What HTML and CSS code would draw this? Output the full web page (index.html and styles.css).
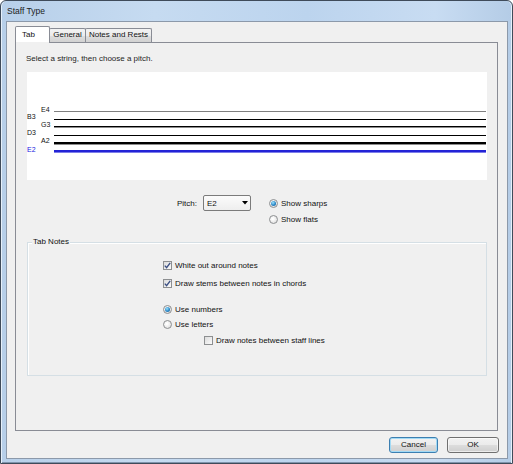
FILE: index.html
```html
<!DOCTYPE html>
<html>
<head>
<meta charset="utf-8">
<title>Staff Type</title>
<link rel="stylesheet" href="styles.css">
</head>
<body>
<div class="window">
  <div class="titlebar"><span class="title">Staff Type</span></div>
  <div class="client">
    <div class="tabs">
      <div class="tab active">Tab</div>
      <div class="tab w-general">General</div>
      <div class="tab w-notes">Notes and Rests</div>
    </div>
    <div class="panel">
      <div class="hint">Select a string, then choose a pitch.</div>
      <div class="staff">
        <svg width="460" height="108" viewBox="0 0 460 108">
          <rect x="27" y="39" width="432" height="1" fill="#7f7f7f"/>
          <rect x="27" y="47" width="432" height="1" fill="#000"/>
          <rect x="27" y="54" width="432" height="1" fill="#000"/>
          <rect x="27" y="55" width="432" height="1" fill="#8c8c8c"/>
          <rect x="27" y="63" width="432" height="1" fill="#000"/>
          <rect x="27" y="70" width="432" height="2" fill="#000"/>
          <rect x="27" y="72" width="432" height="1" fill="#8c8c8c"/>
          <rect x="27" y="78" width="432" height="2" fill="#2323d6"/>
          <rect x="27" y="80" width="432" height="1" fill="#7d7de9"/>
          <g class="notes" font-family="Liberation Sans, Arial, sans-serif" font-size="7">
            <text x="14" y="39.5" fill="#111">E4</text>
            <text x="0" y="47.2" fill="#111">B3</text>
            <text x="14" y="54.8" fill="#111">G3</text>
            <text x="0" y="63.2" fill="#111">D3</text>
            <text x="14" y="71.2" fill="#111">A2</text>
            <text x="0" y="79.5" fill="#2020e0">E2</text>
          </g>
        </svg>
      </div>
      <div class="pitch-row">
        <div class="pitch-field">
          <span class="pitch-label">Pitch:</span>
          <div class="combo">
            <span>E2</span>
            <svg width="6" height="4" viewBox="0 0 6 4"><path d="M0 0 H6 L3 3.5 Z" fill="#000"/></svg>
          </div>
        </div>
        <div class="radios">
          <div class="opt"><span class="radio on"></span>Show sharps</div>
          <div class="opt"><span class="radio"></span>Show flats</div>
        </div>
      </div>
      <div class="group">
        <span class="group-title">Tab Notes</span>
        <div class="gopt"><span class="checkbox"><svg width="7" height="7" viewBox="0 0 7 7"><path d="M0.8 3.6 L2.6 5.6 L6.2 0.9" fill="none" stroke="#3b4f83" stroke-width="1.4"/></svg></span>White out around notes</div>
        <div class="gopt m2"><span class="checkbox"><svg width="7" height="7" viewBox="0 0 7 7"><path d="M0.8 3.6 L2.6 5.6 L6.2 0.9" fill="none" stroke="#3b4f83" stroke-width="1.4"/></svg></span>Draw stems between notes in chords</div>
        <div class="gopt m3"><span class="radio on"></span>Use numbers</div>
        <div class="gopt m4"><span class="radio"></span>Use letters</div>
        <div class="gopt m5"><span class="checkbox"></span>Draw notes between staff lines</div>
      </div>
    </div>
    <div class="buttons">
      <button class="btn focus w-cancel">Cancel</button>
      <button class="btn w-ok">OK</button>
    </div>
  </div>
</div>
</body>
</html>
```

FILE: styles.css
```css
html, body {
  margin: 0;
  padding: 0;
  background: #ffffff;
}

body {
  font-family: "Liberation Sans", Arial, sans-serif;
  font-size: 8px;
  color: #111;
}

.window {
  width: 513px;
  height: 464px;
  box-sizing: border-box;
  border: 1px solid #3f4b5a;
  border-radius: 6px 6px 0 0;
  padding: 0 4px 4px 5px;
  background: linear-gradient(90deg, #b7cfe9 0%, #c6dbf1 30%, #bcd4ee 60%, #c8dcf2 85%, #b4cce6 100%);
  box-shadow: inset 1px 0 0 #e6f0fa, inset -1px 0 0 #e6f0fa, inset 0 -1px 0 #7f93ab;
}

.titlebar {
  height: 20px;
  line-height: 20px;
  padding-left: 1px;
}

.title {
  font-size: 8.5px;
  color: #1c1c1c;
}

.client {
  width: 502px;
  height: 438px;
  box-sizing: border-box;
  border: 1px solid #8c99aa;
  background: #f0f0f0;
  padding: 4px 9px 0 8px;
}

.tabs {
  display: flex;
  align-items: flex-end;
  height: 16px;
}

.tab {
  height: 14px;
  box-sizing: border-box;
  border: 1px solid #898c95;
  border-bottom: none;
  border-radius: 2px 2px 0 0;
  background: linear-gradient(#f3f3f3, #ebebeb 50%, #dedede 50%, #d2d2d2);
  line-height: 12px;
  text-align: center;
  margin-left: -1px;
  color: #111;
}

.tab.active {
  position: relative;
  z-index: 1;
  width: 35px;
  height: 17px;
  margin-left: 0;
  margin-bottom: -1px;
  background: linear-gradient(#ffffff 0, #ffffff 15px, #f0f0f0 15px);
  text-align: left;
  padding-left: 6px;
  line-height: 15px;
}

.w-general { width: 37px; }
.w-notes { width: 67px; }

.panel {
  height: 389px;
  box-sizing: border-box;
  border: 1px solid #898c95;
  background: #f0f0f0;
  padding: 11px 0 0 10px;
}

.hint {
  height: 10px;
  line-height: 10px;
  color: #1e1e1e;
}

.staff {
  margin: 8px 0 0 1px;
  width: 460px;
  height: 108px;
  background: #ffffff;
}

.staff svg {
  display: block;
}

.pitch-row {
  display: flex;
  margin: 15px 0 0 151px;
}

.pitch-field {
  display: flex;
  align-items: center;
  height: 16px;
  gap: 6px;
}

.pitch-label {
  width: 20px;
}

.combo {
  width: 48px;
  height: 16px;
  box-sizing: border-box;
  border: 1px solid #7b7b7b;
  border-radius: 2px;
  background: linear-gradient(#fbfbfb, #eeeeee);
  display: flex;
  align-items: center;
  justify-content: space-between;
  padding: 0 2px 0 3px;
}

.combo svg {
  display: block;
}

.radios {
  margin-left: 18px;
}

.opt {
  display: flex;
  align-items: center;
  height: 16px;
  gap: 3px;
}

.radio {
  flex: none;
  width: 9px;
  height: 9px;
  box-sizing: border-box;
  border-radius: 50%;
  border: 1px solid #8d8f91;
  background: radial-gradient(circle at 40% 40%, #ffffff 10%, #d6d6d6 100%);
  display: flex;
  align-items: center;
  justify-content: center;
}

.radio.on::after {
  content: "";
  width: 5px;
  height: 5px;
  border-radius: 50%;
  background: radial-gradient(circle at 40% 35%, #9be4ff 0%, #2a86c6 55%, #14598f 100%);
}

.group {
  position: relative;
  margin: 15px 0 0 1px;
  width: 460px;
  height: 134px;
  box-sizing: border-box;
  border: 1px solid #d5dfe5;
  box-shadow: inset 1px 1px 0 #ffffff;
  padding: 16px 0 0 135px;
}

.group-title {
  position: absolute;
  top: -6px;
  left: 4px;
  padding: 0 1px;
  line-height: 10px;
  background: #f0f0f0;
}

.gopt {
  display: flex;
  align-items: center;
  height: 12px;
  gap: 3px;
}

.gopt.m2 { margin-top: 6px; }
.gopt.m3 { margin-top: 14px; }
.gopt.m4 { margin-top: 3px; }
.gopt.m5 { margin-top: 4px; margin-left: 41px; }

.checkbox {
  flex: none;
  width: 9px;
  height: 9px;
  box-sizing: border-box;
  border: 1px solid #8d8f91;
  background: linear-gradient(135deg, #dcdcdc, #fbfbfb);
  display: flex;
  align-items: center;
  justify-content: center;
}

.checkbox svg {
  display: block;
}

.buttons {
  display: flex;
  justify-content: flex-end;
  gap: 9px;
  margin-top: 6px;
  margin-right: -1px;
}

.btn {
  height: 16px;
  box-sizing: border-box;
  border: 1px solid #707070;
  border-radius: 3px;
  background: linear-gradient(#f2f2f2, #ebebeb 50%, #dddddd 50%, #cfcfcf);
  box-shadow: inset 0 0 0 1px rgba(255, 255, 255, 0.6);
  font-family: "Liberation Sans", Arial, sans-serif;
  font-size: 8px;
  color: #111;
  padding: 0;
  line-height: 14px;
}

.btn.focus {
  border-color: #3c7fb1;
  box-shadow: inset 0 0 0 1px #a2daf5;
}

.w-cancel { width: 49px; }
.w-ok { width: 52px; }
```
